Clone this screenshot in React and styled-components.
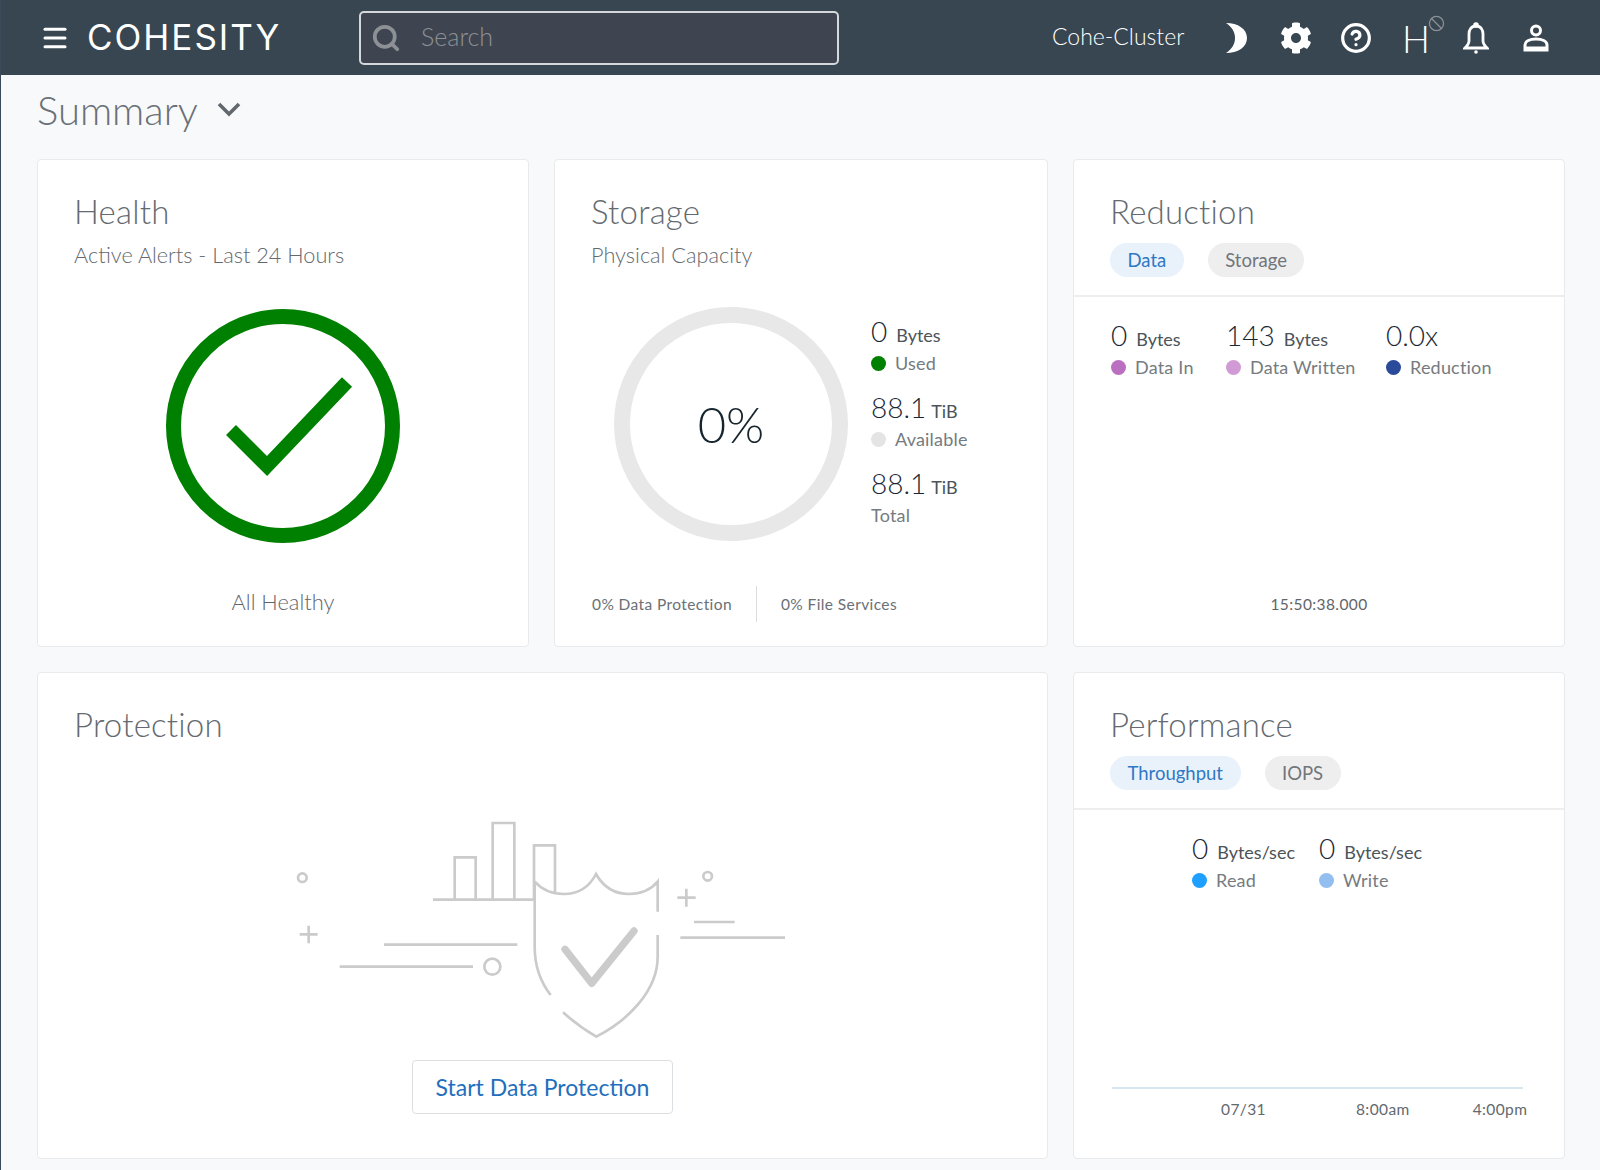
import React from 'react';
import styled, { createGlobalStyle } from 'styled-components';
import { FaCog } from 'react-icons/fa';
import { Search as SearchIcon, CircleHelp, Ban, Menu } from 'lucide-react';

const GlobalStyle = createGlobalStyle`
  html, body {
    margin: 0;
    padding: 0;
    height: 100%;
    overflow: hidden;
    background: #f8f9fa;
    font-family: Lato, "Open Sans", sans-serif;
    font-weight: 300;
  }
  * { box-sizing: border-box; }
`;

const Page = styled.div`
  width: 1600px;
  height: 1170px;
  border-left: 1px solid #3a4a58;
  display: flex;
  flex-direction: column;
`;

const TopBar = styled.header`
  height: 75px;
  flex: none;
  background: #384651;
  display: flex;
  align-items: center;
  padding-left: 39px;
  color: #fff;
`;

const MenuButton = styled.div`
  width: 30px;
  height: 30px;
  display: flex;
  align-items: center;
  justify-content: center;
`;

const Logo = styled.div`
  margin-left: 17px;
  width: 192px;
  font-family: Inter, sans-serif;
  font-size: 35px;
  font-weight: 400;
  letter-spacing: 2px;
  white-space: nowrap;
  padding-bottom: 2px;
`;

const SearchBox = styled.div`
  margin-left: 80px;
  width: 480px;
  height: 54px;
  border: 2px solid #d5d8da;
  border-radius: 5px;
  background: #3e4550;
  display: flex;
  align-items: center;
  padding-left: 10px;
  gap: 20px;
  color: #8d9196;
  font-size: 25px;
`;

const SearchHint = styled.span`
  padding-bottom: 3px;
`;

const Cluster = styled.div`
  margin-left: 213px;
  width: 149px;
  font-size: 23px;
  font-weight: 300;
  padding-bottom: 3px;
  white-space: nowrap;
`;

const IconRow = styled.div`
  display: flex;
  align-items: center;
  margin-left: 5px;
`;

const IconSlot = styled.div`
  position: relative;
  width: 60px;
  height: 40px;
  display: flex;
  align-items: center;
  justify-content: center;
  font-size: ${(p) => p.$size || 30}px;
`;

const Letter = styled.span`
  font-size: 37px;
  font-weight: 300;
  line-height: 1;
  margin-top: 1px;
`;

const BanBadge = styled.span`
  position: absolute;
  top: -3px;
  left: 42px;
  display: flex;
  color: #8c9196;
`;

const Content = styled.main`
  flex: 1;
  padding: 0 35px 0 36px;
`;

const PageTitle = styled.div`
  height: 84px;
  display: flex;
  align-items: center;
  gap: 19px;
  padding-bottom: 15px;
  color: #6a7076;
  font-size: 40px;
`;

const Grid = styled.div`
  display: grid;
  grid-template-columns: 492px 494px 1fr;
  grid-template-rows: 488px 487px;
  column-gap: 25px;
  row-gap: 25px;
`;

const Card = styled.section`
  background: #fff;
  border: 1px solid #e9eaeb;
  border-radius: 4px;
  display: flex;
  flex-direction: column;
  grid-column: span ${(p) => p.$span || 1};
  overflow: hidden;
`;

const CardHead = styled.div`
  padding: 30px 36px 0;
  height: ${(p) => p.$height || 'auto'};
  border-bottom: ${(p) => (p.$rule ? '2px solid #eeeeee' : 'none')};
`;

const CardTitle = styled.h2`
  margin: 0;
  color: #646a70;
  font-size: 33px;
  font-weight: 300;
  letter-spacing: 0.2px;
  line-height: 42px;
`;

const SubTitle = styled.div`
  margin-top: 10px;
  color: #63696e;
  font-size: 21.7px;
  font-weight: 300;
  line-height: 26px;
`;

const Pills = styled.div`
  display: flex;
  gap: 24px;
  margin-top: 11px;
`;

const Pill = styled.div`
  height: 34px;
  padding: 0 17.5px;
  border-radius: 17px;
  display: flex;
  align-items: center;
  font-size: 18.5px;
  font-weight: 400;
  background: ${(p) => (p.$active ? '#e9f2fb' : '#eeeeee')};
  color: ${(p) => (p.$active ? '#2f78c4' : '#71767b')};
`;

const HealthBody = styled.div`
  display: flex;
  flex-direction: column;
  align-items: center;
  margin-top: 41px;
`;

const HealthCaption = styled.div`
  margin-top: 45px;
  color: #5f6569;
  font-size: 21.8px;
  font-weight: 300;
  line-height: 28px;
`;

const StorageBody = styled.div`
  display: flex;
  padding: 39px 0 0 59px;
  height: 318px;
`;

const Donut = styled.div`
  position: relative;
  width: 234px;
  height: 234px;
  border: 16px solid #e8e8e8;
  border-radius: 50%;
  display: flex;
  align-items: center;
  justify-content: center;
  color: #16242e;
  font-size: 49px;
`;

const StorageLegend = styled.div`
  margin-left: 23px;
  margin-top: 6px;
  display: flex;
  flex-direction: column;
`;

const Stat = styled.div`
  margin-bottom: ${(p) => p.$gap || 0}px;
`;

const Value = styled.div`
  display: flex;
  align-items: baseline;
  gap: ${(p) => p.$gap || 9}px;
  height: 36px;
  color: #1a2833;
  font-size: 28px;
  line-height: 36px;
  white-space: nowrap;
`;

const Unit = styled.span`
  color: #4c5359;
  font-size: 18px;
  font-weight: 400;
  line-height: 1;
`;

const Label = styled.div`
  display: flex;
  align-items: center;
  gap: 9px;
  color: #757b80;
  font-size: 18px;
  font-weight: 400;
  letter-spacing: 0.2px;
  line-height: 24px;
  margin-top: 2px;
  white-space: nowrap;
`;

const Dot = styled.span`
  width: 15px;
  height: 15px;
  border-radius: 50%;
  flex: none;
  background: ${(p) => p.$color};
`;

const StorageFoot = styled.div`
  display: flex;
  align-items: center;
  padding-left: 37px;
  color: #6a7075;
  font-size: 15.5px;
  font-weight: 400;
  letter-spacing: 0.4px;
`;

const FootCell = styled.div`
  height: 36px;
  display: flex;
  align-items: center;
  padding-right: 24px;
  margin-right: 24px;
  border-right: ${(p) => (p.$rule ? '1px solid #dcdcdc' : 'none')};
`;

const StatRow = styled.div`
  display: flex;
  padding: 20px 0 0 ${(p) => p.$left || 37}px;
`;

const StatCol = styled.div`
  width: ${(p) => p.$width}px;
  flex: none;
`;

const TimeStamp = styled.div`
  margin-top: auto;
  margin-bottom: 33px;
  text-align: center;
  color: #5f6569;
  font-size: 15.5px;
  font-weight: 400;
  letter-spacing: 0.4px;
`;

const EmptyState = styled.div`
  display: flex;
  flex-direction: column;
  align-items: center;
  margin-top: 55px;
`;

const Illustration = styled.svg`
  display: block;
  margin-left: -7px;
`;

const StartButton = styled.button`
  margin-top: 20px;
  width: 261px;
  height: 54px;
  border: 1px solid #dcdfe1;
  border-radius: 4px;
  background: #fff;
  color: #1e6fbd;
  font-family: inherit;
  font-size: 23px;
  font-weight: 400;
`;

const ChartAxis = styled.div`
  margin: auto 41px 0 38px;
  height: 71px;
  border-top: 2px solid #d8e6f0;
`;

const Ticks = styled.div`
  display: flex;
  padding: 11px 0 0 109px;
  color: #63696e;
  font-size: 15.5px;
  font-weight: 400;
  letter-spacing: 0.4px;
  white-space: nowrap;
  overflow: hidden;
  width: 415px;
`;

const Tick = styled.span`
  flex: none;
  margin-left: ${(p) => p.$gap || 0}px;
`;

function CheckRing() {
  return (
    <svg width="234" height="234" viewBox="0 0 234 234">
      <circle cx="117" cy="117" r="109.5" fill="none" stroke="#008000" strokeWidth="15" />
      <path d="M65 121 L101 157 L181 73" fill="none" stroke="#008000" strokeWidth="14" />
    </svg>
  );
}

function Moon() {
  return (
    <svg width="24" height="32" viewBox="0 0 24 32">
      <path d="M2 1 C14 1 23 7 23 16 C23 25 14 31 2 31 C8 27 11 22 11 16 C11 10 8 5 2 1 Z" fill="#fff" />
    </svg>
  );
}

function Bell() {
  return (
    <svg width="26" height="32" viewBox="0 0 26 32" fill="none" stroke="#fff" strokeWidth="2.8">
      <path d="M13 4 C8 4 6 8 6 12 L6 19 C6 22 4 24 2 26 L24 26 C22 24 20 22 20 19 L20 12 C20 8 18 4 13 4 Z" />
      <circle cx="13" cy="3" r="1.4" fill="#fff" />
      <circle cx="13" cy="30" r="1.8" fill="#fff" stroke="none" />
    </svg>
  );
}

function User() {
  return (
    <svg width="26" height="28" viewBox="0 0 26 28" fill="none" stroke="#fff" strokeWidth="3">
      <circle cx="13" cy="6.5" r="4.5" />
      <path d="M2 26 L2 21 C2 17 7 15 13 15 C19 15 24 17 24 21 L24 26 Z" />
      <path d="M2 24 L24 24" />
    </svg>
  );
}

function ProtectIllustration() {
  return (
    <Illustration width="520" height="240" viewBox="0 0 1560 720" fill="none" stroke="#cbcbcb" strokeWidth="8">
      <circle cx="70" cy="233" r="13" />
      <path d="M62 403 H116 M89 377 V430" />
      <path d="M315 434 H715 M182 500 H582" />
      <circle cx="640" cy="500" r="24" />
      <path d="M462 299 H765 M527 299 V172 H590 V299 M641 299 V69 H706 V299 M765 299 V136 H828 V278" />
      <path d="M767 245 Q800 282 855 282 Q920 282 951 222 Q985 282 1050 282 Q1105 282 1136 245 V335" />
      <path d="M1136 405 V470 C1136 570 1050 660 952 710 Q900 680 852 637" />
      <path d="M815 585 C780 540 767 490 767 440 V245" />
      <path d="M858 448 L938 550 L1065 393" strokeWidth="22" strokeLinecap="round" strokeLinejoin="round" />
      <circle cx="1286" cy="229" r="13" />
      <path d="M1195 293 H1250 M1222 266 V320" />
      <path d="M1245 366 H1367 M1204 413 H1518" />
    </Illustration>
  );
}

export default function App() {
  return (
    <Page>
      <GlobalStyle />
      <TopBar>
        <MenuButton><Menu size={38} strokeWidth={2.4} /></MenuButton>
        <Logo>COHESITY</Logo>
        <SearchBox>
          <SearchIcon size={30} strokeWidth={3} />
          <SearchHint>Search</SearchHint>
        </SearchBox>
        <Cluster>Cohe-Cluster</Cluster>
        <IconRow>
          <IconSlot><Moon /></IconSlot>
          <IconSlot $size={32}><FaCog /></IconSlot>
          <IconSlot><CircleHelp size={32} strokeWidth={2.4} /></IconSlot>
          <IconSlot>
            <Letter>H</Letter>
            <BanBadge><Ban size={17} strokeWidth={1.8} /></BanBadge>
          </IconSlot>
          <IconSlot><Bell /></IconSlot>
          <IconSlot><User /></IconSlot>
        </IconRow>
      </TopBar>

      <Content>
        <PageTitle>
          Summary
          <svg width="24" height="15" viewBox="0 0 24 15" fill="none" stroke="#62686e" strokeWidth="3.6">
            <path d="M2 2 L12 12 L22 2" />
          </svg>
        </PageTitle>

        <Grid>
          <Card>
            <CardHead>
              <CardTitle>Health</CardTitle>
              <SubTitle>Active Alerts - Last 24 Hours</SubTitle>
            </CardHead>
            <HealthBody>
              <CheckRing />
              <HealthCaption>All Healthy</HealthCaption>
            </HealthBody>
          </Card>

          <Card>
            <CardHead>
              <CardTitle>Storage</CardTitle>
              <SubTitle>Physical Capacity</SubTitle>
            </CardHead>
            <StorageBody>
              <Donut>0%</Donut>
              <StorageLegend>
                <Stat $gap={14}>
                  <Value><span>0</span><Unit>Bytes</Unit></Value>
                  <Label><Dot $color="#008000" /> Used</Label>
                </Stat>
                <Stat $gap={14}>
                  <Value $gap={5}><span>88.1</span><Unit>TiB</Unit></Value>
                  <Label><Dot $color="#e4e4e4" /> Available</Label>
                </Stat>
                <Stat>
                  <Value $gap={5}><span>88.1</span><Unit>TiB</Unit></Value>
                  <Label>Total</Label>
                </Stat>
              </StorageLegend>
            </StorageBody>
            <StorageFoot>
              <FootCell $rule>0% Data Protection</FootCell>
              <FootCell>0% File Services</FootCell>
            </StorageFoot>
          </Card>

          <Card>
            <CardHead $rule $height="137px">
              <CardTitle>Reduction</CardTitle>
              <Pills>
                <Pill $active>Data</Pill>
                <Pill>Storage</Pill>
              </Pills>
            </CardHead>
            <StatRow>
              <StatCol $width={115}>
                <Value><span>0</span><Unit>Bytes</Unit></Value>
                <Label><Dot $color="#bb6fc1" /> Data In</Label>
              </StatCol>
              <StatCol $width={160}>
                <Value><span>143</span><Unit>Bytes</Unit></Value>
                <Label><Dot $color="#d09ad4" /> Data Written</Label>
              </StatCol>
              <StatCol $width={130}>
                <Value><span>0.0x</span></Value>
                <Label><Dot $color="#2a4a9a" /> Reduction</Label>
              </StatCol>
            </StatRow>
            <TimeStamp>15:50:38.000</TimeStamp>
          </Card>

          <Card $span={2}>
            <CardHead>
              <CardTitle>Protection</CardTitle>
            </CardHead>
            <EmptyState>
              <ProtectIllustration />
              <StartButton>Start Data Protection</StartButton>
            </EmptyState>
          </Card>

          <Card>
            <CardHead $rule $height="137px">
              <CardTitle>Performance</CardTitle>
              <Pills>
                <Pill $active>Throughput</Pill>
                <Pill>IOPS</Pill>
              </Pills>
            </CardHead>
            <StatRow $left={118}>
              <StatCol $width={127}>
                <Value><span>0</span><Unit>Bytes/sec</Unit></Value>
                <Label><Dot $color="#1f9fff" /> Read</Label>
              </StatCol>
              <StatCol $width={127}>
                <Value><span>0</span><Unit>Bytes/sec</Unit></Value>
                <Label><Dot $color="#92bfef" /> Write</Label>
              </StatCol>
            </StatRow>
            <ChartAxis>
              <Ticks>
                <Tick>07/31</Tick>
                <Tick $gap={90}>8:00am</Tick>
                <Tick $gap={63}>4:00pm</Tick>
              </Ticks>
            </ChartAxis>
          </Card>
        </Grid>
      </Content>
    </Page>
  );
}
